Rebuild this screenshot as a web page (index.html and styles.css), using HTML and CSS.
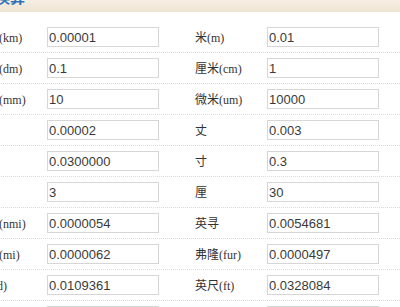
FILE: index.html
```html
<html>

<head>
    <meta charset="utf-8">
    <link rel="stylesheet" href="styles.css">
</head>

<body>
    <div class="page">
        <div class="title-bar">
            <h2 class="title">长度换算</h2>
        </div>
        <div class="converter">
            <div class="row">
                <div class="label">千米(km)</div>
                <div class="cell"><input class="value" type="text" value="0.00001"></div>
                <div class="label">米(m)</div>
                <div class="cell"><input class="value" type="text" value="0.01"></div>
            </div>
            <div class="row">
                <div class="label">分米(dm)</div>
                <div class="cell"><input class="value" type="text" value="0.1"></div>
                <div class="label">厘米(cm)</div>
                <div class="cell"><input class="value" type="text" value="1"></div>
            </div>
            <div class="row">
                <div class="label">毫米(mm)</div>
                <div class="cell"><input class="value" type="text" value="10"></div>
                <div class="label">微米(um)</div>
                <div class="cell"><input class="value" type="text" value="10000"></div>
            </div>
            <div class="row">
                <div class="label">里</div>
                <div class="cell"><input class="value" type="text" value="0.00002"></div>
                <div class="label">丈</div>
                <div class="cell"><input class="value" type="text" value="0.003"></div>
            </div>
            <div class="row">
                <div class="label">尺</div>
                <div class="cell"><input class="value" type="text" value="0.0300000"></div>
                <div class="label">寸</div>
                <div class="cell"><input class="value" type="text" value="0.3"></div>
            </div>
            <div class="row">
                <div class="label">分</div>
                <div class="cell"><input class="value" type="text" value="3"></div>
                <div class="label">厘</div>
                <div class="cell"><input class="value" type="text" value="30"></div>
            </div>
            <div class="row">
                <div class="label">海里(nmi)</div>
                <div class="cell"><input class="value" type="text" value="0.0000054"></div>
                <div class="label">英寻</div>
                <div class="cell"><input class="value" type="text" value="0.0054681"></div>
            </div>
            <div class="row">
                <div class="label">英里(mi)</div>
                <div class="cell"><input class="value" type="text" value="0.0000062"></div>
                <div class="label">弗隆(fur)</div>
                <div class="cell"><input class="value" type="text" value="0.0000497"></div>
            </div>
            <div class="row">
                <div class="label">码(yd)</div>
                <div class="cell"><input class="value" type="text" value="0.0109361"></div>
                <div class="label">英尺(ft)</div>
                <div class="cell"><input class="value" type="text" value="0.0328084"></div>
            </div>
            <div class="row">
                <div class="label">英寸(in)</div>
                <div class="cell"><input class="value" type="text" value="0.3937008"></div>
                <div class="label">密耳(mil)</div>
                <div class="cell"><input class="value" type="text" value="393.7007874"></div>
            </div>
        </div>
    </div>
</body>

</html>
```

FILE: styles.css
```css
body {
    margin: 0;
    background-color: #fff;
    overflow: hidden;
}

.page {
    margin-left: -25px;
}

.title-bar {
    height: 12px;
    overflow: hidden;
    background: linear-gradient(to bottom, #f6eee2, #efe4d2);
}

.title {
    margin: -12px 0 0 -10px;
    font-family: "Noto Sans CJK SC", sans-serif;
    font-size: 15px;
    line-height: 18px;
    font-weight: bold;
    color: #2f73b9;
}

.converter {
    margin-top: 10px;
}

.row {
    display: grid;
    grid-template-columns: 72px 148px 72px 1fr;
    align-items: center;
    height: 30px;
    border-bottom: 1px dotted #dcdcdc;
}

.label {
    font-family: "Liberation Serif", "Noto Sans CJK SC", serif;
    font-size: 12px;
    color: #333;
    white-space: nowrap;
}

.cell {
    display: flex;
    align-items: center;
}

.value {
    box-sizing: border-box;
    width: 112px;
    height: 20px;
    margin: 0;
    padding: 0 1px;
    border: 1px solid #d6d6d6;
    font-family: "Liberation Sans", Arial, sans-serif;
    font-size: 13px;
    color: #3a3a3a;
    background-color: #fff;
}
```
